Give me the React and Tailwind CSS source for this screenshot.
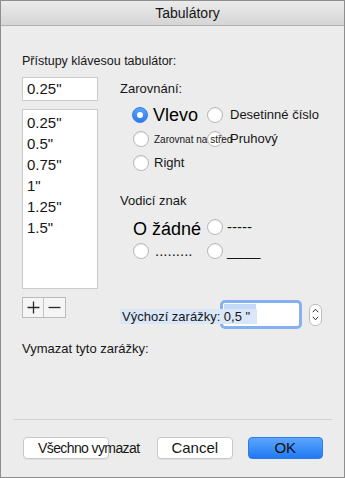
import React from 'react';

function Radio({ checked }) {
  if (checked) {
    return (
      <span className="w-[16px] h-[16px] shrink-0 rounded-full bg-gradient-to-b from-[#5aa2fb] to-[#2a7ef0] border border-[#2f7ce0] flex items-center justify-center">
        <span className="w-[6px] h-[6px] rounded-full bg-white" />
      </span>
    );
  }
  return (
    <span className="w-[16px] h-[16px] shrink-0 rounded-full bg-white border border-[#b9b9b9] shadow-[inset_0_1px_1px_rgba(0,0,0,0.08)]" />
  );
}

const stops = ['0.25"', '0.5"', '0.75"', '1"', '1.25"', '1.5"'];

export default function App() {
  return (
    <div className="w-[345px] h-[478px] bg-[#ececec] border border-[#8e8e8e] flex flex-col font-['Liberation_Sans',Arial,sans-serif] text-[#161616] overflow-hidden">
      {/* title bar */}
      <div className="h-[25px] shrink-0 bg-gradient-to-b from-[#ebebeb] to-[#d5d5d5] border-b border-[#b1b1b1] flex items-center justify-center pl-[30px] text-[14px]">
        Tabulátory
      </div>

      <div className="flex flex-col px-[21px] pt-[27px]">
        <div className="text-[12.5px] leading-[16px]">Přístupy klávesou tabulátor:</div>

        <div className="flex mt-[8px]">
          {/* left column */}
          <div className="w-[76px] shrink-0 flex flex-col">
            <div className="h-[24px] bg-white border border-[#cbcbcb] flex items-center px-[4px] text-[15px]">0.25"</div>
            <div className="h-[180px] mt-[8px] bg-white border border-[#cbcbcb] pt-[2px] px-[4px] text-[15px] leading-[21px]">
              {stops.map((s) => (
                <div key={s}>{s}</div>
              ))}
            </div>
            <div className="flex mt-[8px] w-[44px] h-[21px] border border-[#bababa] bg-[#f5f5f5]">
              <div className="w-[21px] flex items-center justify-center border-r border-[#c4c4c4]">
                <svg width="13" height="13" viewBox="0 0 13 13">
                  <path d="M6.5 0.5v12M0.5 6.5h12" stroke="#2a2a2a" strokeWidth="1.3" />
                </svg>
              </div>
              <div className="flex-1 flex items-center justify-center">
                <svg width="13" height="13" viewBox="0 0 13 13">
                  <path d="M0.5 6.5h12" stroke="#2a2a2a" strokeWidth="1.3" />
                </svg>
              </div>
            </div>
          </div>

          {/* right column */}
          <div className="ml-[22px] flex-1 flex flex-col">
            <div className="mt-[4px] text-[13px] leading-[16px]">Zarovnání:</div>

            <div className="mt-[6px] h-[24px] flex items-center pl-[12px]">
              <div className="w-[75px] shrink-0 flex items-center">
                <Radio checked />
                <span className="ml-[5px] text-[18px] leading-[20px] text-black">Vlevo</span>
              </div>
              <Radio />
              <span className="ml-[7px] text-[13px] whitespace-nowrap">Desetinné číslo</span>
            </div>

            <div className="h-[24px] flex items-center pl-[13px]">
              <div className="w-[74px] shrink-0 flex items-center">
                <Radio />
                <span className="ml-[5px] text-[10px] whitespace-nowrap relative z-10">Zarovnat na střed</span>
              </div>
              <Radio />
              <span className="ml-[7px] text-[13px]">Pruhový</span>
            </div>

            <div className="h-[24px] flex items-center pl-[13px]">
              <Radio />
              <span className="ml-[5px] text-[13px]">Right</span>
            </div>

            <div className="mt-[18px] text-[13px] leading-[16px]">Vodicí znak</div>

            <div className="mt-[6px] h-[24px] flex items-center pl-[13px]">
              <div className="w-[74px] shrink-0 pt-[4px] text-[18px] leading-[20px] text-black whitespace-nowrap">O žádné</div>
              <Radio />
              <span className="ml-[4px] text-[15px]">-----</span>
            </div>

            <div className="h-[24px] flex items-center pl-[13px]">
              <div className="w-[74px] shrink-0 flex items-center">
                <Radio />
                <span className="ml-[6px] text-[15px] leading-[16px]">.........</span>
              </div>
              <Radio />
              <span className="ml-[4px] text-[15px]">____</span>
            </div>

            <div className="mt-[37px] h-[29px] flex items-center">
              <span className="relative z-10 mt-[3px] w-[137px] shrink-0 bg-[#dae7f8] px-[2px] text-[13px] leading-[15px] whitespace-nowrap">
                Výchozí zarážky: 0,5 "
              </span>
              <div className="ml-[-37px] w-[82px] h-[29px] shrink-0 rounded-[5px] border-[3px] border-[#86b1f0] bg-white p-[1px]">
                <div className="w-[32px] h-[19px] bg-[#c3d9f7]" />
              </div>
              <div className="ml-[7px] w-[13px] h-[22px] rounded-[6px] border border-[#bdbdbd] bg-white flex flex-col items-center justify-center gap-[3px]">
                <svg width="7" height="5" viewBox="0 0 7 5">
                  <path d="M0.8 4.2L3.5 1.2L6.2 4.2" stroke="#333" strokeWidth="1" fill="none" />
                </svg>
                <svg width="7" height="5" viewBox="0 0 7 5">
                  <path d="M0.8 0.8L3.5 3.8L6.2 0.8" stroke="#333" strokeWidth="1" fill="none" />
                </svg>
              </div>
            </div>
          </div>
        </div>

        <div className="mt-[12px] text-[13px] leading-[16px]">Vymazat tyto zarážky:</div>

        <div className="mt-[62px] -mx-[9px] h-px bg-[#d2d2d2]" />

        <div className="mt-[17px] flex items-center">
          <div className="ml-[1px] w-[86px] h-[22px] bg-white border border-[#c8c8c8] rounded-[4px] shadow-[0_1px_0_rgba(0,0,0,0.05)] flex items-center pl-[14px] text-[14px] tracking-[-0.6px] whitespace-nowrap overflow-visible">
            Všechno vymazat
          </div>
          <div className="ml-[48px] w-[76px] h-[22px] bg-white border border-[#c8c8c8] rounded-[4px] shadow-[0_1px_0_rgba(0,0,0,0.05)] flex items-center justify-center text-[15px]">
            Cancel
          </div>
          <div className="ml-[15px] w-[76px] h-[22px] bg-gradient-to-b from-[#5ba5fd] to-[#1e79f3] border border-[#2b7de9] rounded-[4px] flex items-center justify-center text-[15px] text-[#111]">
            OK
          </div>
        </div>
      </div>
    </div>
  );
}
